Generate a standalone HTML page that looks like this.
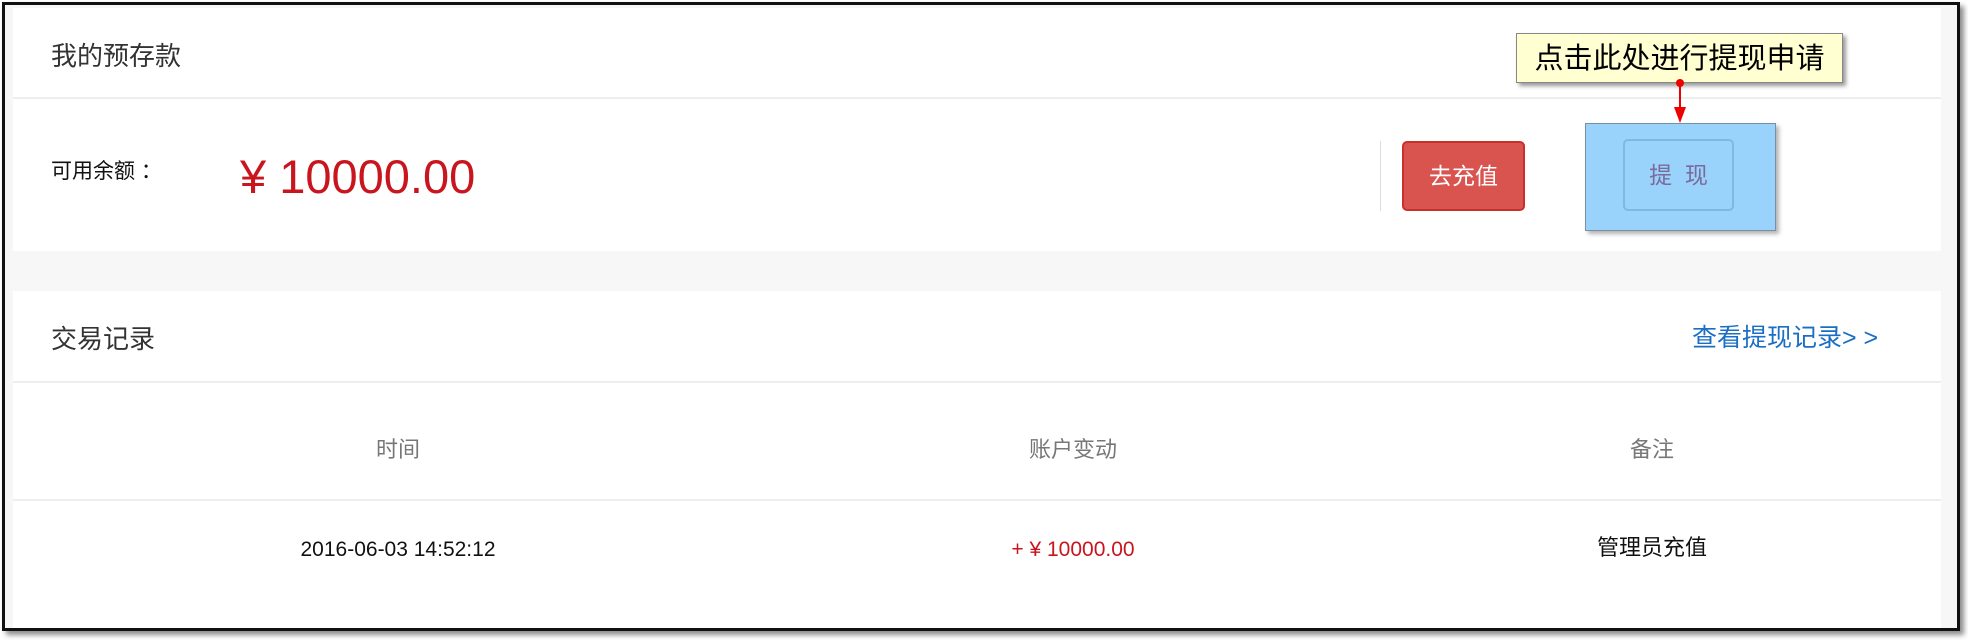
<!DOCTYPE html>
<html><head><meta charset="utf-8"><style>
*{margin:0;padding:0;box-sizing:border-box}
body{width:1968px;height:643px;background:#fff;position:relative;overflow:hidden;font-family:"Liberation Sans","Noto Sans CJK SC",sans-serif}
.a{position:absolute}
.frame{left:2px;top:2px;width:1958px;height:629px;border:3px solid #111;box-shadow:4px 4px 5px rgba(0,0,0,.45);background:#f7f7f7}
.t{white-space:nowrap;line-height:1}
</style></head><body>
<div class="a frame"></div>
<div class="a" style="left:13px;top:8px;width:1928px;height:243px;background:#fff"></div>
<div class="a" style="left:13px;top:97px;width:1928px;height:2px;background:#eee"></div>
<div class="a" style="left:13px;top:291px;width:1928px;height:337px;background:#fff"></div>
<div class="a" style="left:13px;top:381px;width:1928px;height:2px;background:#eee"></div>
<div class="a" style="left:13px;top:499px;width:1928px;height:2px;background:#eee"></div>

<div class="a t" style="left:51px;top:43px;font-size:26px;color:#333">我的预存款</div>
<div class="a t" style="left:51px;top:161px;font-size:21px;color:#111">可用余额&nbsp;：</div>
<div class="a t" style="left:240px;top:153px;font-size:47px;color:#c9151e">¥ 10000.00</div>
<div class="a" style="left:1380px;top:141px;width:1px;height:70px;background:#ddd"></div>
<div class="a t" style="left:1402px;top:141px;width:123px;height:70px;background:#d9534f;border:2px solid #c9302c;border-radius:5px;color:#fff;font-size:23px;text-align:center;line-height:66px">去充值</div>

<div class="a" style="left:1585px;top:123px;width:191px;height:108px;background:#99d3fc;border:1px solid #7a8fa3;box-shadow:3px 3px 4px rgba(0,0,0,.3)"></div>
<div class="a t" style="left:1623px;top:139px;width:111px;height:72px;border:2px solid #7fb8e0;border-radius:5px;color:#7b6a9c;font-size:23px;text-align:center;line-height:68px">提&nbsp;&nbsp;现</div>

<div class="a t" style="left:1516px;top:33px;width:327px;height:50px;background:#ffffd2;border:1px solid #888;box-shadow:3px 3px 4px rgba(0,0,0,.4);font-size:29px;color:#000;text-align:center;line-height:50px">点击此处进行提现申请</div>
<svg class="a" style="left:1670px;top:76px" width="20" height="50"><circle cx="10" cy="7" r="4" fill="#e00"/><line x1="10" y1="7" x2="10" y2="40" stroke="#e00" stroke-width="2"/><polygon points="4,31 16,31 10,47" fill="#e00"/></svg>

<div class="a t" style="left:51px;top:326px;font-size:26px;color:#333">交易记录</div>
<div class="a t" style="left:1692px;top:326px;font-size:25px;color:#1a6fc4">查看提现记录&gt; &gt;</div>

<div class="a t" style="left:298px;top:439px;width:200px;text-align:center;font-size:22px;color:#777">时间</div>
<div class="a t" style="left:973px;top:439px;width:200px;text-align:center;font-size:22px;color:#777">账户变动</div>
<div class="a t" style="left:1552px;top:439px;width:200px;text-align:center;font-size:22px;color:#777">备注</div>
<div class="a t" style="left:248px;top:539px;width:300px;text-align:center;font-size:21px;color:#111">2016-06-03 14:52:12</div>
<div class="a t" style="left:923px;top:539px;width:300px;text-align:center;font-size:21px;color:#c9151e">+ ¥ 10000.00</div>
<div class="a t" style="left:1502px;top:537px;width:300px;text-align:center;font-size:22px;color:#111">管理员充值</div>
</body></html>
